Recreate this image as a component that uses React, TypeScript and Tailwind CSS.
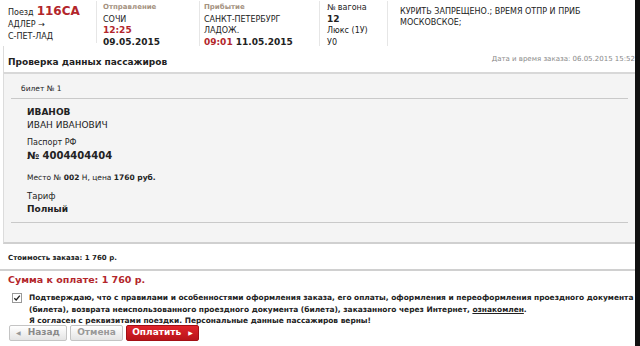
import React from "react";

const F = "font-['DejaVu_Sans',Verdana,sans-serif]";

function HeaderCol({ className, children }: { className?: string; children: React.ReactNode }) {
  return <div className={`border-r border-[#e6e6e6] ${className ?? ""}`}>{children}</div>;
}

export default function App() {
  return (
    <div className={`w-[640px] h-[346px] bg-white flex overflow-hidden text-[#222] ${F}`}>
      <div className="flex-1 flex flex-col min-w-0">
        {/* header */}
        <div className="flex h-[46px] pt-[1px]">
          <HeaderCol className="w-[97px] pl-[8px] pt-[3px] leading-[12px] h-[42px]">
            <div className="flex items-baseline gap-[3px]">
              <span className="text-[8px]">Поезд</span>
              <span className="text-[12px] font-bold text-[#b3262b] leading-[15px]">116СА</span>
            </div>
            <div className="text-[8px]">АДЛЕР →</div>
            <div className="text-[8px]">С-ПЕТ-ЛАД</div>
          </HeaderCol>
          <HeaderCol className="w-[103px] pl-[6px] pt-[1px] leading-[11.5px] h-[45px]">
            <div className="text-[7px] font-bold text-[#a5927f]">Отправление</div>
            <div className="text-[8px]">СОЧИ</div>
            <div className="text-[9px] font-bold text-[#b3262b]">12:25</div>
            <div className="text-[9px] font-bold">09.05.2015</div>
          </HeaderCol>
          <HeaderCol className="w-[120px] pl-[4px] pt-[1px] leading-[11.5px] h-[45px]">
            <div className="text-[7px] font-bold text-[#a5927f]">Прибытие</div>
            <div className="text-[8px]">САНКТ-ПЕТЕРБУРГ</div>
            <div className="text-[8px]">ЛАДОЖ.</div>
            <div className="text-[9px] font-bold">
              <span className="text-[#b3262b]">09:01</span> 11.05.2015
            </div>
          </HeaderCol>
          <HeaderCol className="w-[68px] pl-[7px] pt-[1px] leading-[11.5px] h-[45px]">
            <div className="text-[8px]">№ вагона</div>
            <div className="text-[9px] font-bold">12</div>
            <div className="text-[8px]">Люкс (1У)</div>
            <div className="text-[8px]">У0</div>
          </HeaderCol>
          <div className="flex-1 pl-[12px] pt-[5px] text-[8px] leading-[11px] whitespace-nowrap">
            <div>КУРИТЬ ЗАПРЕЩЕНО.; ВРЕМЯ ОТПР И ПРИБ</div>
            <div>МОСКОВСКОЕ;</div>
          </div>
        </div>

        {/* title row */}
        <div className="flex items-end justify-between h-[26px] pb-[3px] pl-[8px] border-l border-[#dcdcdc] ml-[3px]">
          <div className="text-[9px] font-bold -ml-[4px]">Проверка данных пассажиров</div>
          <div className="text-[7px] text-[#8a8a8a] whitespace-nowrap mb-[5px]">Дата и время заказа: 06.05.2015 15:52</div>
        </div>

        {/* gray panel */}
        <div className="ml-[3px] border-l border-[#dcdcdc] bg-[#f4f4f4] border-t-2 border-t-[#d8d8d8] border-b-2 border-b-[#d0d0d0] h-[172px] flex flex-col">
          <div className="mx-[7px] border-b border-[#c9c9c9] h-[25px] flex items-center pl-[10px] text-[7.5px] pt-[5px]">
            билет № 1
          </div>
          <div className="mx-[7px] border-b border-[#c9c9c9] pl-[16px] pt-[7px] h-[124px]">
            <div className="text-[9px] font-bold leading-[13px]">ИВАНОВ</div>
            <div className="text-[9px] leading-[13px]">ИВАН ИВАНОВИЧ</div>
            <div className="text-[8px] leading-[10px] mt-[6px]">Паспорт РФ</div>
            <div className="text-[10px] font-bold leading-[16px]">№ 4004404404</div>
            <div className="text-[7.5px] leading-[10px] mt-[9px]">
              Место № <b>002</b> Н, цена <b>1760 руб.</b>
            </div>
            <div className="text-[8.5px] leading-[11px] mt-[8px]">Тариф</div>
            <div className="text-[9px] font-bold leading-[15px]">Полный</div>
          </div>
        </div>

        {/* cost */}
        <div className="h-[27px] flex items-end pb-[6px] pl-[8px] border-b-2 border-[#d0d0d0] text-[7px] leading-[10px] font-bold">
          Стоимость заказа: 1 760 р.
        </div>
        <div className="pl-[8px] pt-[2px] text-[9.5px] leading-[14px] text-[#b3262b] font-bold">
          Сумма к оплате: 1 760 р.
        </div>

        {/* agreement */}
        <div className="flex mt-[5px] pl-[12px]">
          <div className="w-[10px] h-[10px] border border-[#999] bg-white flex items-center justify-center mt-[1px] shrink-0">
            <svg width="8" height="8" viewBox="0 0 8 8">
              <path d="M1.3 4.2 L3.2 6 L6.8 1.6" stroke="#222" strokeWidth="1.3" fill="none" />
            </svg>
          </div>
          <div className="pl-[7px] text-[7.45px] font-bold leading-[11.5px] whitespace-nowrap">
            <div>Подтверждаю, что с правилами и особенностями оформления заказа, его оплаты, оформления и переоформления проездного документа</div>
            <div>
              (билета), возврата неиспользованного проездного документа (билета), заказанного через Интернет, <span className="underline">ознакомлен</span>.
            </div>
            <div>Я согласен с реквизитами поездки. Персональные данные пассажиров верны!</div>
          </div>
        </div>

        {/* buttons */}
        <div className="flex gap-[3px] pl-[9px] -mt-[2px]">
          <div className="h-[16px] w-[58px] border border-[#c4c4c4] rounded-[2px] bg-gradient-to-b from-white to-[#e4e4e4] flex items-center pl-[6px] gap-[7px] text-[9px] font-bold text-[#8a8a8a]">
            <span className="text-[6px] text-[#999]">◀</span>
            <span>Назад</span>
          </div>
          <div className="h-[16px] w-[53px] border border-[#c4c4c4] rounded-[2px] bg-gradient-to-b from-white to-[#e4e4e4] flex items-center justify-center text-[9px] font-bold text-[#999]">
            Отмена
          </div>
          <div className="h-[16px] w-[73px] border border-[#a30f14] rounded-[2px] bg-gradient-to-b from-[#e0242a] to-[#b8141a] flex items-center justify-center gap-[7px] text-[9px] font-bold text-white">
            <span>Оплатить</span>
            <span className="text-[6px]">▶</span>
          </div>
        </div>
      </div>
      <div className="w-[5px] bg-[#111] shrink-0" />
    </div>
  );
}
